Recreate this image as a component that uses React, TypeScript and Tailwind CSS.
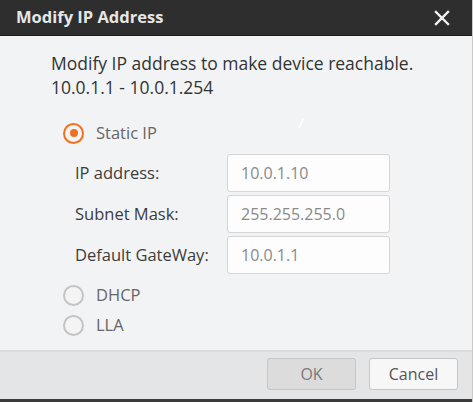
import React from "react";

const font = { fontFamily: '"Open Sans", "Noto Sans", sans-serif' };

const Radio: React.FC<{ checked?: boolean; label: string }> = ({ checked, label }) => (
  <div className="flex items-center h-[30px]">
    {checked ? (
      <span className="w-[21px] h-[21px] rounded-full border-2 border-[#f07022] flex items-center justify-center">
        <span className="w-[8px] h-[8px] rounded-full bg-[#f07022]" />
      </span>
    ) : (
      <span className="w-[21px] h-[21px] rounded-full border-2 border-[#c4c4c4] bg-[#f4f4f4]" />
    )}
    <span className="ml-[12px] text-[16.5px] text-[#666]">{label}</span>
  </div>
);

const Field: React.FC<{ label: string; value: string }> = ({ label, value }) => (
  <div className="flex items-center">
    <span className="w-[152px] text-[16.5px] text-[#3c3c3c]">{label}</span>
    <div className="w-[163px] h-[38px] border border-[#d6d6d6] rounded-[3px] bg-[#fdfdfd] flex items-center pl-[13px] text-[16px] text-[#8a8a8a]">
      {value}
    </div>
  </div>
);

export default function App() {
  return (
    <div className="w-[473px] h-[402px] flex flex-col bg-[#f2f3f5] border-r border-[#c9c9c9] relative" style={font}>
      {/* title bar */}
      <div className="h-[36px] bg-[#2e2e2e] border-b border-[#1c1c1c] flex items-center justify-between pl-[16px] pr-[22px]">
        <span className="text-[16.5px] font-bold text-[#e6e6e6]">Modify IP Address</span>
        <svg width="16" height="16" viewBox="0 0 16 16">
          <path d="M2 2L14 14M14 2L2 14" stroke="#f2f2f2" strokeWidth="2.4" strokeLinecap="square" />
        </svg>
      </div>

      {/* body */}
      <div className="flex-1 pl-[51px] pt-[15px]">
        <p className="text-[17.5px] leading-[24px] text-[#333]">
          Modify IP address to make device reachable.
          <br />
          10.0.1.1 - 10.0.1.254
        </p>
        <div className="ml-[12px] mt-[19px]">
          <Radio checked label="Static IP" />
          <div className="ml-[12px] mt-[6px] flex flex-col gap-[3px]">
            <Field label="IP address:" value="10.0.1.10" />
            <Field label="Subnet Mask:" value="255.255.255.0" />
            <Field label="Default GateWay:" value="10.0.1.1" />
          </div>
          <div className="mt-[6px]">
            <Radio label="DHCP" />
            <Radio label="LLA" />
          </div>
        </div>
      </div>

      {/* stray highlight mark */}
      <span className="absolute left-[300px] top-[118px] w-[2px] h-[11px] bg-white rotate-[25deg] rounded-full" />

      {/* footer */}
      <div className="h-[49px] bg-[#e4e5e7] border-t-2 border-[#dadbdd] flex items-start justify-end gap-[13px] pt-[6px] pr-[14px]">
        <button className="w-[89px] h-[32px] rounded-[3px] border border-[#c6c6c6] bg-[#dcdcdc] text-[16px] text-[#7a7a7a]">
          OK
        </button>
        <button className="w-[89px] h-[32px] rounded-[3px] border border-[#c6c6c6] bg-[#f7f7f7] text-[16px] text-[#555]">
          Cancel
        </button>
      </div>
      <div className="h-[3px] bg-[#3a3a3a]" />
    </div>
  );
}
